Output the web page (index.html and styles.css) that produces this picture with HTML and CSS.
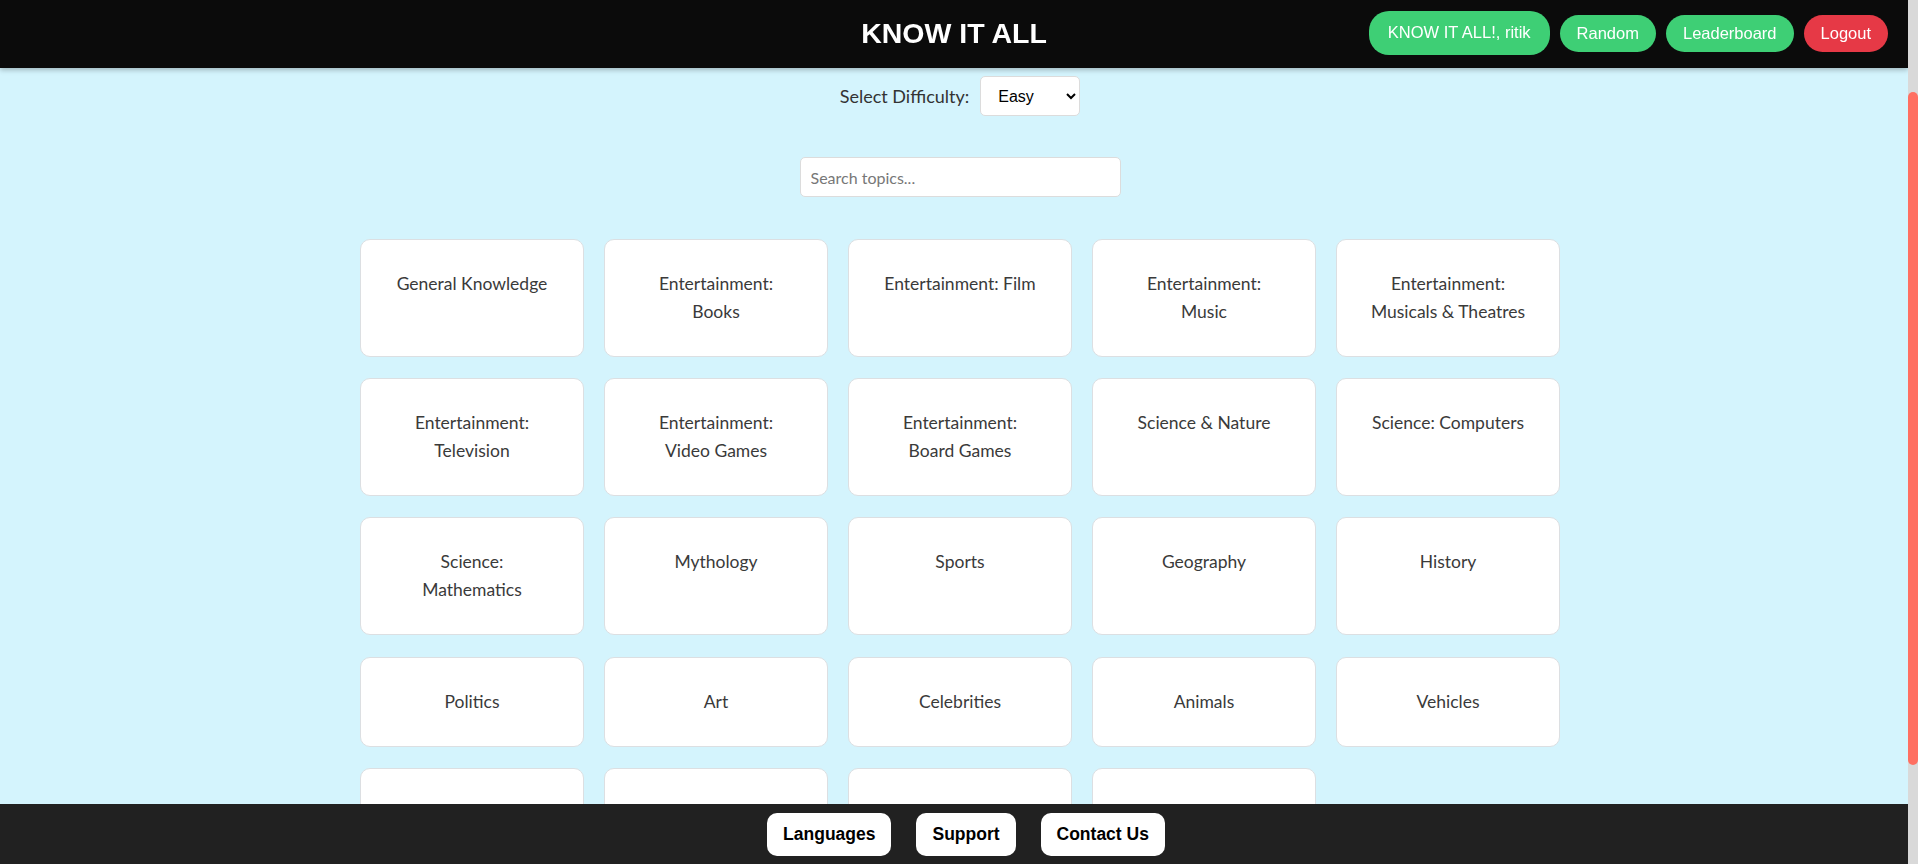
FILE: index.html
```html
<!DOCTYPE html>
<html lang="en">
<head>
<meta charset="utf-8">
<title>KNOW IT ALL</title>
<link rel="stylesheet" href="styles.css">
</head>
<body>
<header class="topbar">
  <div class="topbar-side"></div>
  <h1 class="brand">KNOW IT ALL</h1>
  <nav class="topbar-actions">
    <span class="pill pill-green pill-user">KNOW IT ALL!, ritik</span>
    <a class="pill pill-green" href="#">Random</a>
    <a class="pill pill-green" href="#">Leaderboard</a>
    <a class="pill pill-red" href="#">Logout</a>
  </nav>
</header>

<main class="page">
  <div class="difficulty">
    <label class="difficulty-label" for="difficulty">Select Difficulty:</label>
    <select class="difficulty-select" id="difficulty">
      <option>Easy</option>
      <option>Medium</option>
      <option>Hard</option>
    </select>
  </div>

  <div class="search">
    <input class="search-input" type="text" placeholder="Search topics...">
  </div>

  <section class="topics">
    <div class="topic">General Knowledge</div>
    <div class="topic">Entertainment: Books</div>
    <div class="topic">Entertainment: Film</div>
    <div class="topic">Entertainment: Music</div>
    <div class="topic">Entertainment: Musicals&nbsp;&amp;&nbsp;Theatres</div>
    <div class="topic">Entertainment: Television</div>
    <div class="topic">Entertainment: Video Games</div>
    <div class="topic">Entertainment: Board Games</div>
    <div class="topic">Science &amp; Nature</div>
    <div class="topic">Science: Computers</div>
    <div class="topic">Science: Mathematics</div>
    <div class="topic">Mythology</div>
    <div class="topic">Sports</div>
    <div class="topic">Geography</div>
    <div class="topic">History</div>
    <div class="topic">Politics</div>
    <div class="topic">Art</div>
    <div class="topic">Celebrities</div>
    <div class="topic">Animals</div>
    <div class="topic">Vehicles</div>
    <div class="topic">Entertainment: Comics</div>
    <div class="topic">Science: Gadgets</div>
    <div class="topic">Entertainment: Japanese Anime &amp; Manga</div>
    <div class="topic">Entertainment: Cartoon &amp; Animations</div>
  </section>
</main>

<footer class="bottombar">
  <a class="foot-btn" href="#">Languages</a>
  <a class="foot-btn" href="#">Support</a>
  <a class="foot-btn" href="#">Contact Us</a>
</footer>

<div class="scrollbar" aria-hidden="true">
  <div class="scrollbar-thumb"></div>
</div>
</body>
</html>
```

FILE: styles.css
```css
body {
  margin: 0;
  padding-right: 10px;
  background: #d4f4fd;
  font-family: "Lato", "Liberation Sans", sans-serif;
  color: #333;
}

/* header */
.topbar {
  position: fixed;
  top: 0;
  left: 0;
  right: 10px;
  z-index: 10;
  height: 66px;
  padding: 0 20px 2px;
  display: grid;
  grid-template-columns: 1fr auto 1fr;
  align-items: center;
  background: #0b0b0b;
  box-shadow: 0 2px 5px rgba(0, 0, 0, 0.25);
}

.brand {
  margin: 0;
  color: #fff;
  font-family: "Liberation Sans", sans-serif;
  font-size: 28.5px;
  font-weight: 700;
}

.topbar-actions {
  justify-self: end;
  display: flex;
  align-items: center;
  gap: 10px;
}

.pill {
  display: inline-block;
  padding: 9px 17px;
  border-radius: 20px;
  color: #fff;
  text-decoration: none;
  font-family: "Liberation Sans", sans-serif;
  font-size: 16.5px;
  line-height: 19px;
}

.pill-user {
  padding: 12px 19px 13px;
}

.pill-green {
  background: #3ecf75;
}

.pill-red {
  background: #e63946;
}

/* main */
.page {
  padding: 76px 0 100px 12px;
}

.difficulty {
  display: flex;
  justify-content: center;
  align-items: center;
  gap: 11px;
}

.difficulty-label {
  font-size: 18px;
  color: #333;
}

.difficulty-select {
  width: 100px;
  height: 40px;
  padding: 0 6px 0 13px;
  border: 1px solid #dcdcdc;
  border-radius: 5px;
  background: #fff;
  color: #000;
  font-family: "Liberation Sans", sans-serif;
  font-size: 16px;
}

.search {
  display: flex;
  justify-content: center;
  margin-top: 41px;
}

.search-input {
  box-sizing: border-box;
  width: 321px;
  height: 40px;
  padding: 0 10px;
  border: 1px solid #dcdcdc;
  border-radius: 5px;
  background: #fff;
  font-family: "Lato", sans-serif;
  font-size: 16px;
  color: #333;
}

.search-input::placeholder {
  color: #777;
}

.topics {
  width: 1200px;
  margin: 41.5px auto 0;
  display: grid;
  grid-template-columns: repeat(5, 1fr);
  column-gap: 20px;
  row-gap: 21.4px;
}

.topic {
  padding: 30px 33px;
  border: 1px solid #dcdfe2;
  border-radius: 10px;
  background: #fff;
  text-align: center;
  font-size: 17.5px;
  line-height: 28px;
  color: #3a3a3a;
}

/* footer */
.bottombar {
  position: fixed;
  left: 0;
  right: 10px;
  bottom: 0;
  z-index: 10;
  height: 60px;
  padding-left: 24px;
  display: flex;
  justify-content: center;
  align-items: center;
  gap: 25px;
  background: #212121;
}

.foot-btn {
  padding: 11px 16px 12px;
  border-radius: 10px;
  background: #fff;
  color: #000;
  text-decoration: none;
  font-family: "Liberation Sans", sans-serif;
  font-size: 17.5px;
  font-weight: 700;
  line-height: 20px;
}

/* page scrollbar */
.scrollbar {
  position: fixed;
  top: 0;
  right: 0;
  bottom: 0;
  z-index: 20;
  width: 10px;
  background: #d9d9d9;
}

.scrollbar-thumb {
  margin-top: 92px;
  height: 673px;
  border-radius: 10px;
  background: #ff6f61;
}
```
